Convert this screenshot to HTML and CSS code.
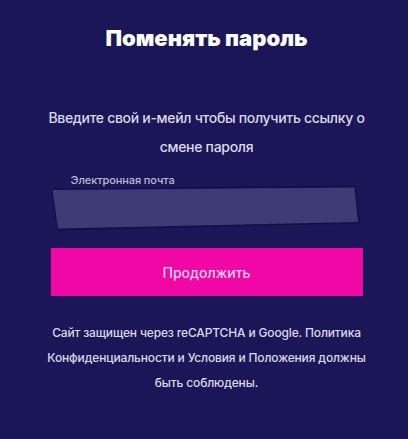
FILE: index.html
```html
<!DOCTYPE html>
<html lang="ru">
<head>
<meta charset="utf-8">
<link rel="stylesheet" href="styles.css">
</head>
<body>
<main class="page">
  <h1 class="title">Поменять пароль</h1>
  <p class="subtitle">Введите свой и-мейл чтобы получить ссылку о смене пароля</p>
  <form class="form">
    <label class="label" for="email">Электронная почта</label>
    <div class="field-outer">
      <input class="field" id="email" type="email">
    </div>
    <button class="submit" type="button">Продолжить</button>
  </form>
  <p class="note">Сайт защищен через reCAPTCHA и Google. Политика Конфиденциальности и Условия и Положения должны быть соблюдены.</p>
</main>
</body>
</html>
```
FILE: styles.css
```css
html, body {
  margin: 0;
  padding: 0;
  background: #1a1657;
}
body {
  font-family: Inter, "Noto Sans", sans-serif;
  color: #ffffff;
}
.page {
  display: flex;
  flex-direction: column;
  align-items: center;
  padding-top: 23px;
  padding-left: 5px;
}
.title {
  margin: 0;
  font-size: 22px;
  line-height: 30px;
  font-weight: 900;
  letter-spacing: 0;
  color: #ffffff;
}
.subtitle {
  margin: 50px 0 0;
  width: 330px;
  text-align: center;
  font-size: 14px;
  line-height: 29px;
  font-weight: 500;
  letter-spacing: -0.3px;
  color: #dcdaea;
}
.form {
  width: 312px;
  margin-top: 12px;
  display: flex;
  flex-direction: column;
}
.label {
  padding-left: 20px;
  font-size: 11px;
  line-height: 14px;
  font-weight: 500;
  letter-spacing: -0.1px;
  color: #bdbbd3;
}
.field-outer {
  margin-top: -2px;
  width: 310px;
  height: 46px;
  background: #121046;
  clip-path: polygon(0.5px 3.5px, 305.5px 0.5px, 309.5px 38.5px, 6.5px 45.5px);
}
.field {
  display: block;
  box-sizing: border-box;
  width: 310px;
  height: 46px;
  margin: 0;
  padding: 0 20px;
  border: 0;
  outline: none;
  background: #3e3a78;
  color: #ffffff;
  font: inherit;
  clip-path: polygon(2px 5px, 304px 2.5px, 307.5px 37px, 7.5px 43.5px);
}
.submit {
  margin-top: 17px;
  height: 48px;
  width: 312px;
  border: 0;
  background: #f007a6;
  color: #ecd0e8;
  font-family: inherit;
  font-size: 14px;
  font-weight: 500;
  cursor: pointer;
}
.note {
  margin: 24px 0 0;
  width: 330px;
  text-align: center;
  font-size: 12px;
  line-height: 25px;
  font-weight: 500;
  letter-spacing: -0.15px;
  color: #dcdaea;
}
```
